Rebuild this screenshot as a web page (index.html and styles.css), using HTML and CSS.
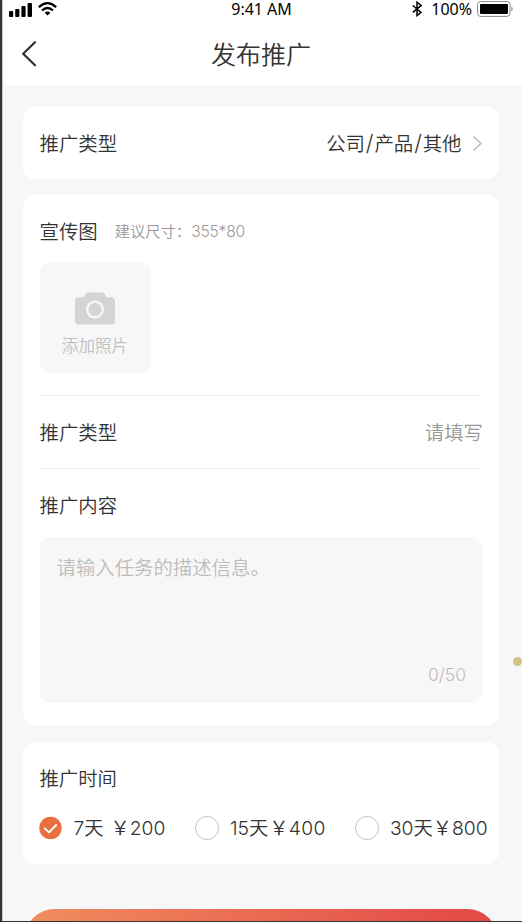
FILE: index.html
```html
<!DOCTYPE html>
<html lang="zh-CN">
<head>
<meta charset="utf-8">
<title>发布推广</title>
<link rel="stylesheet" href="styles.css">
</head>
<body>
<div class="screen">
  <header class="header">
    <div class="status">
      <div class="signals">
        <svg class="bars" width="24" height="15" viewBox="0 0 24 15"><rect x="0" y="9" width="4.2" height="6" rx="1"/><rect x="6.2" y="7" width="4.2" height="8" rx="1"/><rect x="12.4" y="4" width="4.2" height="11" rx="1"/><rect x="18.6" y="1" width="4.4" height="14" rx="1"/></svg>
        <svg width="19" height="14" viewBox="0 0 19 14"><g fill="none" stroke="#000" stroke-width="2.2"><path d="M.8 5.1Q9.5-2.7 18.2 5.1"/><path d="M4 8.5Q9.5 3.5 15 8.5"/></g><path d="M6.6 10.7Q9.5 8.4 12.4 10.7L9.5 13.6Z"/></svg>
      </div>
      <time class="clock">9:41 AM</time>
      <div class="power">
        <svg class="bluetooth" width="10" height="16" viewBox="0 0 10 16"><path d="M.8 4.5 9 11.4 5 14.6V1.2L9 4.5.8 11.4" fill="none" stroke="#000" stroke-width="1.5"/></svg>
        <span class="percent">100%</span>
        <svg width="37" height="16" viewBox="0 0 37 16"><rect x=".6" y=".6" width="32.4" height="14.8" rx="3" fill="#fff" stroke="#888"/><rect x="3" y="3" width="28" height="10" rx="1"/><path d="M34.5 5.3Q36.8 8 34.5 10.7Z" fill="#777"/></svg>
      </div>
    </div>
    <div class="navbar">
      <svg class="back" width="16" height="28" viewBox="0 0 16 28"><path d="M14 2.3 2.2 13.8 14 25.3" fill="none" stroke="#333" stroke-width="2.3" stroke-linecap="round" stroke-linejoin="round"/></svg>
      <h1>发布推广</h1>
    </div>
  </header>
  <main>
    <section class="card type-card">
      <span>推广类型</span>
      <span class="choice"><span>公司<span class="slash">/</span>产品<span class="slash">/</span>其他</span>
        <svg width="11" height="17" viewBox="0 0 11 17"><path d="M1.2 1.5 9 8.5 1.2 15.5" fill="none" stroke="#bbb" stroke-width="1.5"/></svg>
      </span>
    </section>
    <section class="card details">
      <div class="image-title"><span>宣传图</span><small>建议尺寸：<span class="latin">355*80</span></small></div>
      <div class="upload">
        <svg width="40" height="33" viewBox="0 0 40 33"><path fill="#d4d4d4" d="M4 5.2H8.2Q9.2 5.2 9.8 3.8L10.5 2Q11.2.5 13 .5H27Q28.8.5 29.6 2L30.5 3.8Q31.2 5.2 32.2 5.2H36Q40 5.2 40 9.2V28.5Q40 32.5 36 32.5H4Q0 32.5 0 28.5V9.2Q0 5.2 4 5.2Z"/><circle cx="20" cy="17.5" r="7.8" fill="#d4d4d4" stroke="#f6f7f9" stroke-width="2.5"/></svg>
        <span>添加照片</span>
      </div>
      <div class="field"><span>推广类型</span><span class="hint">请填写</span></div>
      <div class="content-title">推广内容</div>
      <div class="textarea"><span class="placeholder">请输入任务的描述信息。</span><span class="count">0/50</span></div>
    </section>
    <section class="card duration">
      <div>推广时间</div>
      <div class="options">
        <div class="option"><svg width="23" height="24" viewBox="0 0 23 24"><circle cx="11.5" cy="12" r="11.2" fill="#e96f40"/><path d="M5.7 12.4 10 16.4 17.2 9" fill="none" stroke="#fff" stroke-width="1.9" stroke-linecap="round" stroke-linejoin="round"/></svg><span>7天</span><span class="price">￥200</span></div>
        <div class="option"><i class="radio"></i><span>15天</span><span class="price">￥400</span></div>
        <div class="option"><i class="radio"></i><span>30天</span><span class="price">￥800</span></div>
      </div>
    </section>
    <div class="submit"></div>
  </main>
  <i class="side-dot"></i>
</div>
</body>
</html>
```
FILE: styles.css
```css
* { box-sizing: border-box; }
body { margin: 0; }
.screen {
  position: relative;
  width: 522px;
  height: 922px;
  overflow: hidden;
  background: #f7f7f7;
  border-left: 2px solid #343436;
  border-bottom: 1px solid #343436;
  box-shadow: inset 1px 0 #c8c8c8;
  color: #333;
  font: 350 19.4px/28px Inter, "Noto Sans CJK SC", sans-serif;
}
svg { display: block; flex: none; }
.header { height: 85px; margin-left: 1px; background: #fff; }
.status {
  display: grid;
  grid-template-columns: 1fr auto 1fr;
  align-items: center;
  height: 18px;
  padding: 0 8px 0 6px;
  color: #000;
  font: 400 16px/18px "Noto Sans", sans-serif;
}
.signals { display: flex; align-items: center; gap: 5px; }
.clock { letter-spacing: -.05px; }
.power { display: flex; align-items: center; justify-content: flex-end; }
.bluetooth { margin-right: 9px; }
.percent { margin-right: 5px; }
.navbar {
  display: grid;
  grid-template-columns: 16px 1fr 16px;
  align-items: center;
  height: 72px;
  padding: 0 21px 0 18px;
}
h1 { margin: 0; padding-top: 1px; font-size: 25px; line-height: 36px; font-weight: 350; text-align: center; }
main { padding: 22px 21px 0; }
.card { width: 476px; border-radius: 12px; background: #fff; padding: 0 16px 0 16.5px; }
.type-card { display: flex; justify-content: space-between; align-items: center; height: 72px; padding-top: 1px; }
.choice { display: flex; align-items: center; gap: 10.5px; }
.slash { display: inline-block; width: 9.5px; font-size: 22px; line-height: 20px; text-align: center; font-weight: 300; }
.details { height: 530px; margin-top: 16px; padding-top: 23px; }
.image-title { display: flex; align-items: center; height: 28px; gap: 17px; }
.image-title small { color: #999; font-size: 15.3px; }
.latin { font-size: 15.6px; font-weight: 300; letter-spacing: -.2px; }
.upload {
  display: flex;
  flex-direction: column;
  align-items: center;
  width: 111px;
  height: 111px;
  margin-top: 16px;
  padding-top: 30px;
  border-radius: 10px;
  background: #f6f7f9;
  color: #c0c0c0;
  font-size: 16.6px;
}
.upload span { line-height: 24px; margin-top: 9px; }
.field {
  display: flex;
  justify-content: space-between;
  align-items: center;
  height: 74px;
  margin-top: 22px;
  padding-top: 2px;
  border-top: 1px solid #f2f2f2;
  border-bottom: 1px solid #f2f2f2;
}
.hint { color: #999; }
.content-title { margin-top: 23px; }
.textarea {
  display: flex;
  flex-direction: column;
  justify-content: space-between;
  height: 166px;
  margin-top: 17px;
  padding: 17px 17px 14px;
  border-radius: 12px;
  background: #f7f7f7;
  color: #bdbdbd;
}
.count { align-self: flex-end; font-size: 17.5px; }
.duration { height: 122px; margin-top: 17px; padding: 23px 12px 0 16.4px; }
.options { display: grid; grid-template-columns: 155.5px 160px auto; margin-top: 21px; font-size: 19.3px; }
.option { display: flex; align-items: center; white-space: nowrap; }
.option svg, .radio { margin-right: 11px; }
.radio { width: 24px; height: 24px; border: 1.5px solid #c2c2c2; border-radius: 50%; }
.option:nth-child(2) .price { letter-spacing: .3px; margin-left: 1px; }
.option:first-child .price { margin-left: 7px; }
.submit {
  height: 62px;
  width: 474px;
  margin-top: 45px;
  margin-left: 1px;
  border-radius: 31px;
  background: linear-gradient(100deg, #f18d5f, #e34b47 92%);
}
.side-dot {
  position: absolute;
  left: 511px;
  top: 657px;
  width: 9px;
  height: 9px;
  border-radius: 50%;
  background: #cfc486;
}
```
